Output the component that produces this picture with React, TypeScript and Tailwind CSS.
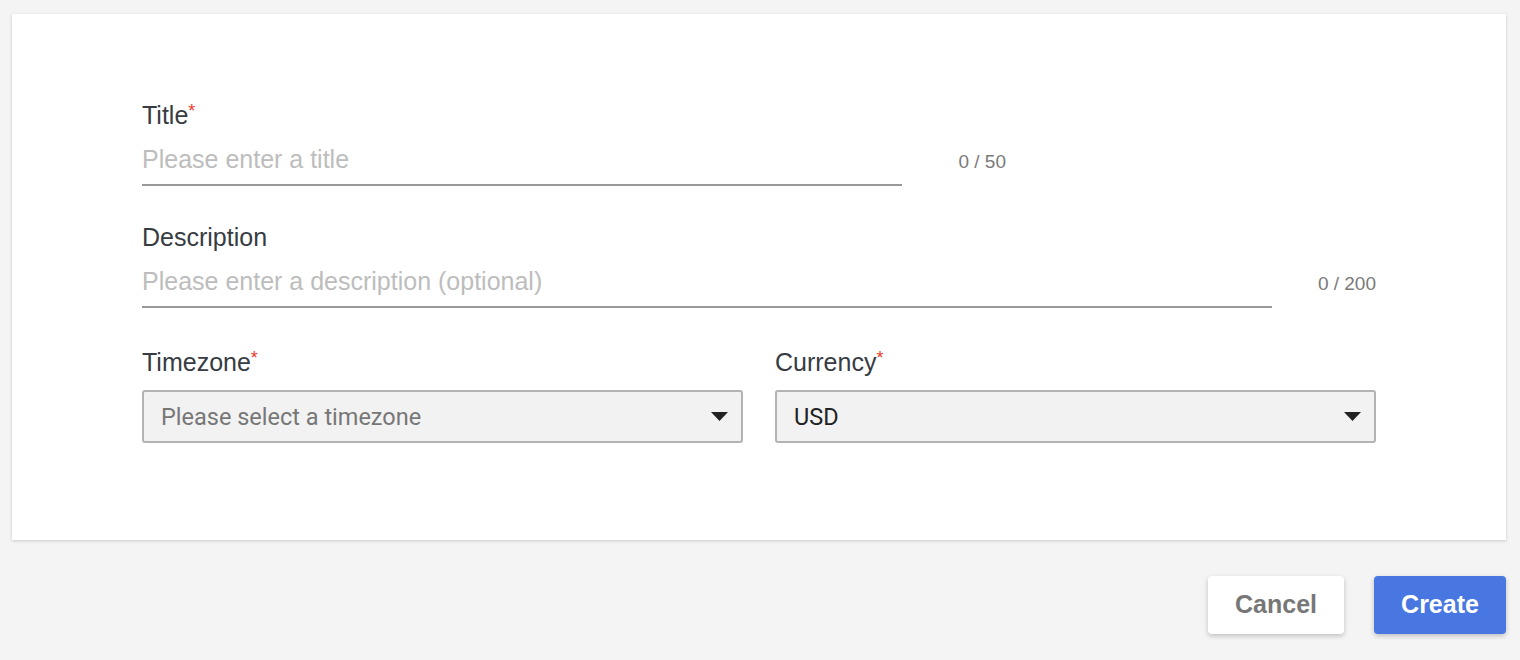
import React from "react";

function Label({ text, required }: { text: string; required?: boolean }) {
  return (
    <div className="h-[28px] text-[25px] leading-[28px] text-[#373b42]">
      {text}
      {required && <span className="relative top-[-7px] align-baseline text-[18px] leading-none text-[#ec3a2c]">*</span>}
    </div>
  );
}

function TextField({
  label,
  required,
  placeholder,
  counter,
  width,
}: {
  label: string;
  required?: boolean;
  placeholder: string;
  counter: string;
  width: string;
}) {
  return (
    <div>
      <Label text={label} required={required} />
      <div className="mt-[16px] flex items-baseline">
        <div className={`${width} border-b-2 border-[#999999] pb-[11px] text-[25px] leading-[28px] text-[#bdbdbd]`}>
          {placeholder}
        </div>
        <div className="w-[104px] text-right text-[19px] leading-[28px] text-[#7a7a7a]">{counter}</div>
      </div>
    </div>
  );
}

function Select({ label, value, placeholder }: { label: string; value?: string; placeholder?: string }) {
  return (
    <div>
      <Label text={label} required />
      <div className="mt-[14px] flex h-[53px] items-center justify-between rounded-[3px] border-2 border-[#b3b3b3] bg-[#f2f2f2] pl-[17px] pr-[13px]">
        <span
          className={`text-[23.5px] leading-[28px] ${value ? "text-[#222222]" : "text-[#777777]"}`}
          style={{ fontFamily: "Roboto, 'Liberation Sans', sans-serif" }}
        >
          {value ?? placeholder}
        </span>
        <svg width="17" height="9" viewBox="0 0 17 9">
          <polygon points="0,0 17,0 8.5,9" fill="#222222" />
        </svg>
      </div>
    </div>
  );
}

export default function App() {
  return (
    <div
      className="h-[660px] w-full bg-[#f4f4f4] pt-[14px] pr-[14px] pl-[12px]"
      style={{ fontFamily: "'Liberation Sans', Arial, sans-serif" }}
    >
      <div className="bg-white px-[130px] pt-[87px] pb-[97px] shadow-[0_1px_3px_rgba(0,0,0,0.18)]">
        <TextField label="Title" required placeholder="Please enter a title" counter="0 / 50" width="w-[760px]" />
        <div className="mt-[37px]">
          <TextField
            label="Description"
            placeholder="Please enter a description (optional)"
            counter="0 / 200"
            width="w-[1130px]"
          />
        </div>
        <div className="mt-[40px] grid grid-cols-2 gap-8">
          <Select label="Timezone" placeholder="Please select a timezone" />
          <Select label="Currency" value="USD" />
        </div>
      </div>
      <div className="mt-[36px] flex justify-end gap-[30px]">
        <button className="h-[58px] w-[136px] rounded-[4px] bg-white text-[25px] font-bold text-[#777777] shadow-[0_2px_5px_rgba(0,0,0,0.22)]">
          Cancel
        </button>
        <button className="h-[58px] w-[132px] rounded-[4px] bg-[#4877e1] text-[25px] font-bold text-white shadow-[0_2px_5px_rgba(0,0,0,0.22)]">
          Create
        </button>
      </div>
    </div>
  );
}
